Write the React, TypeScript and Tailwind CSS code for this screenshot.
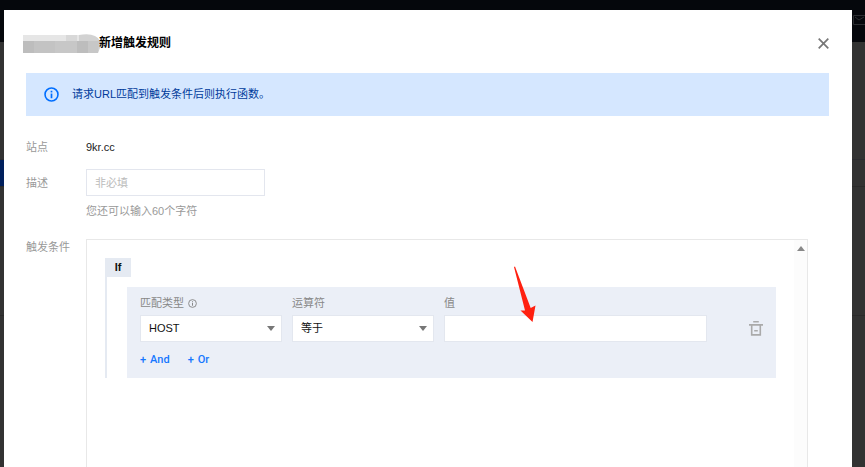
import { useState } from "react";

const fieldClass =
  "h-[27px] w-full appearance-none rounded-none border border-[#e3e7ef] bg-white px-2 text-[11px] text-[#111] outline-none";

function InfoIcon({ className }: { className?: string }) {
  return (
    <svg viewBox="0 0 16 16" fill="none" stroke="currentColor" className={className} aria-hidden="true">
      <circle cx="8" cy="8" r="6.9" strokeWidth="1.7" />
      <path d="M8 7v5" strokeWidth="1.8" />
      <path d="M8 4v1.8" strokeWidth="1.8" />
    </svg>
  );
}

function TrashIcon() {
  return (
    <svg viewBox="0 0 14 15" fill="none" stroke="currentColor" strokeWidth="1.6" className="h-[15px] w-[14px]" aria-hidden="true">
      <path d="M4.2 0.8h5.6M0 3.9h14M2.7 4v9.9h8.6V4M5.2 9.8h3.6" />
    </svg>
  );
}

function RedactedName() {
  return (
    <svg viewBox="0 0 78 19" className="h-[19px] w-[78px]" aria-hidden="true">
      <path d="M0 1h56q10-2 16 1q4 2 5 5q2 3 0 7l-2 5H0z" fill="#d2d2d2" />
      <path d="M0 1h56v6H0z" fill="#e6e6e6" />
      <path d="M43 1h11v6H43z" fill="#d8d8d8" />
      <path d="M0 7h11v12H0zM54 7h11v12H54z" fill="#bdbdbd" />
      <path d="M11 7h21v12H11z" fill="#c3c3c3" />
      <path d="M32 7h22v12H32zM65 7h11l-1 12H65z" fill="#c7c7c7" />
    </svg>
  );
}

type SelectFieldProps = {
  id: string;
  label: string;
  options: string[];
  info?: boolean;
};

function SelectField({ id, label, options, info }: SelectFieldProps) {
  return (
    <div className="w-[142px]">
      <label htmlFor={id} className="flex h-4 items-center gap-1 text-[#888]">
        {label}
        {info && <InfoIcon className="h-[9px] w-[9px]" />}
      </label>
      <div className="relative mt-1">
        <select id={id} className={fieldClass}>
          {options.map((option) => (
            <option key={option}>{option}</option>
          ))}
        </select>
        <svg viewBox="0 0 8 5" className="pointer-events-none absolute top-[11px] right-[7px] h-[5px] w-2" aria-hidden="true">
          <path d="M0 0h8L4 5z" fill="#777" />
        </svg>
      </div>
    </div>
  );
}

export default function App() {
  const [description, setDescription] = useState("");
  const [value, setValue] = useState("");

  return (
    <div className="relative h-screen overflow-hidden bg-[#323232] font-['Liberation_Sans','Noto_Sans_CJK_SC',sans-serif] text-[11px]">
      <div className="flex h-[42px] justify-end bg-[#05070c]">
        <svg viewBox="0 0 12 10" className="mt-[15px] h-[10px] w-3" fill="none" stroke="#2b2d31" aria-hidden="true">
          <path d="M.5.5h13v9H.5zM2 2l4 3 5-3" />
        </svg>
      </div>
      <div className="h-[118px] border-b border-[#2b2b2f]" />
      <div className="h-[27px] border-b border-[#2a2a2a]">
        <div className="h-full w-1 bg-[#001f5c]" />
      </div>
      <div className="h-[129px] border-b border-[#2a2a2a]" />

      <div
        role="dialog"
        aria-labelledby="dialog-title"
        className="absolute inset-x-0 top-[10px] bottom-0 mr-[13px] ml-1 flex flex-col bg-white pr-[23px] pl-[22px]"
      >
        <header className="-ml-[3px] mt-[22px] flex h-[22px] items-center">
          <RedactedName />
          <h1 id="dialog-title" className="-ml-[2px] text-[12px] font-bold text-black">
            新增触发规则
          </h1>
          <button type="button" aria-label="关闭" className="ml-auto text-[#777]">
            <svg viewBox="0 0 11 11" className="h-[11px] w-[11px]" fill="none" stroke="currentColor" strokeWidth="1.7" aria-hidden="true">
              <path d="M.7.7l9.6 9.6M10.3.7L.7 10.3" />
            </svg>
          </button>
        </header>

        <div className="mt-[19px] flex h-[43px] shrink-0 items-center gap-[13px] bg-[#d5e7ff] pl-[18px] text-[#003b9b]">
          <InfoIcon className="h-[15px] w-[15px] text-[#006eff]" />
          <p>请求URL匹配到触发条件后则执行函数。</p>
        </div>

        <form className="mr-[21px] flex min-h-0 flex-1 flex-col">
          <div className="mt-[21px] flex h-5 items-center">
            <span className="w-[60px] text-[#999]">站点</span>
            <span className="text-[#222]">9kr.cc</span>
          </div>

          <div className="mt-3 flex">
            <label htmlFor="description" className="w-[60px] leading-7 text-[#999]">
              描述
            </label>
            <div>
              <input
                id="description"
                type="text"
                maxLength={60}
                placeholder="非必填"
                value={description}
                onChange={(e) => setDescription(e.target.value)}
                className="block h-[27px] w-[179px] border border-[#e3e6ee] px-2 outline-none placeholder:text-[#bbb]"
              />
              <p className="mt-[5px] leading-5 text-[#999]">您还可以输入{60 - description.length}个字符</p>
            </div>
          </div>

          <div className="mt-[18px] flex min-h-0 flex-1">
            <span className="w-[60px] shrink-0 leading-4 text-[#999]">触发条件</span>
            <div className="flex flex-1 border border-b-0 border-[#e8e8e8]">
              <div className="flex-1 pt-[18px] pr-[18px] pl-[18px]">
                <span className="flex h-[19px] w-[26px] items-center justify-center bg-[#e5eaf2] font-bold text-[#111]">If</span>
                <div className="border-l-2 border-[#e5eaf2] pt-[10px] pl-5">
                  <div className="bg-[#ebeff7] px-[13px] pt-2 pb-[9px]">
                    <div className="flex items-end gap-[10px]">
                      <SelectField id="match-type" label="匹配类型" options={["HOST"]} info />
                      <SelectField id="operator" label="运算符" options={["等于"]} />
                      <div className="relative flex-1">
                        <label htmlFor="match-value" className="block h-4 leading-4 text-[#888]">
                          值
                        </label>
                        <input
                          id="match-value"
                          type="text"
                          value={value}
                          onChange={(e) => setValue(e.target.value)}
                          className={`mt-1 block ${fieldClass}`}
                        />
                        <svg
                          viewBox="0 0 22 56"
                          className="pointer-events-none absolute -top-[29px] left-[70px] h-14 w-[22px]"
                          aria-hidden="true"
                        >
                          <path d="M0 1L1 .5L16.7 42L21.5 39.5L18.5 56L6.5 44.5L11 44.5z" fill="#ff2010" />
                        </svg>
                      </div>
                      <button type="button" aria-label="删除" className="ml-8 flex h-[27px] items-center text-[#aaa]">
                        <TrashIcon />
                      </button>
                    </div>
                    <div className="mt-[9px] flex h-[18px] items-center gap-[18px] font-['Roboto',sans-serif] font-medium text-[#1677ff]">
                      <button type="button" className="flex gap-1">
                        <span>+</span>And
                      </button>
                      <button type="button" className="flex gap-1">
                        <span>+</span>Or
                      </button>
                    </div>
                  </div>
                </div>
              </div>
              <div className="flex w-[13px] justify-center bg-[#fcfcfc] pt-[6px]">
                <svg viewBox="0 0 8 5" className="h-[5px] w-2" aria-hidden="true">
                  <path d="M4 0l4 5H0z" fill="#888" />
                </svg>
              </div>
            </div>
          </div>
        </form>
      </div>
    </div>
  );
}
